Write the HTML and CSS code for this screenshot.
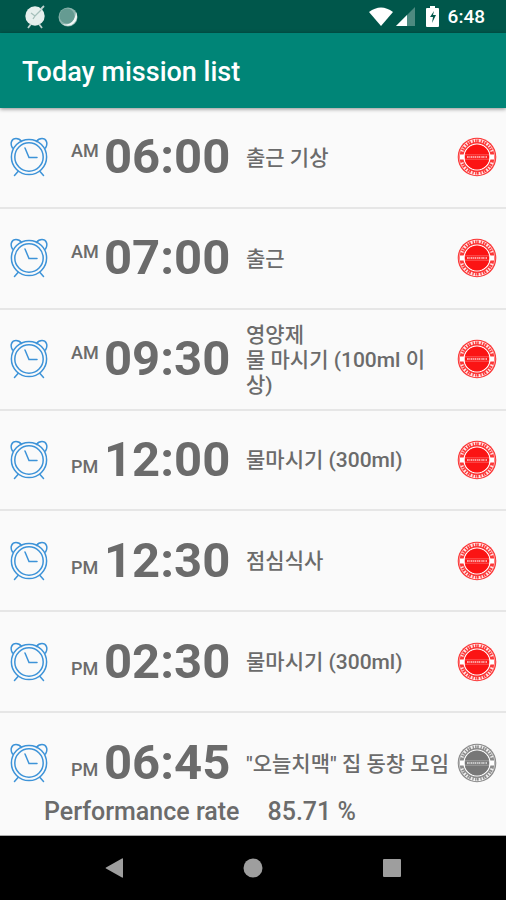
FILE: index.html
```html
<!DOCTYPE html>
<html lang="ko">
<head>
<meta charset="utf-8">
<meta name="viewport" content="width=device-width, initial-scale=1">
<title>Today mission list</title>
<link rel="stylesheet" href="styles.css">
</head>
<body>
<svg class="defs" aria-hidden="true">
  <symbol id="alarm" viewBox="0 0 38 40">
    <g fill="none" stroke="currentColor" stroke-width="1.5" stroke-linecap="round">
      <circle cx="19" cy="20" r="17.6"/>
      <circle cx="19" cy="20" r="14.2"/>
      <path d="M2.500 11C-.5 6 2 1.500 6 1.500 8.500 1.500 10.500 3 11.500 4.500M35.500 11C38.500 6 36 1.500 32 1.500 29.500 1.500 27.500 3 26.500 4.500M8 34.500l-3.500 4M30 34.500l3.500 4M15 11l4 9.500h8"/>
    </g>
  </symbol>
  <symbol id="stamp" viewBox="0 0 40 40">
    <circle cx="20" cy="20" r="19.300" fill="currentColor" opacity=".85"/>
    <g fill="none" stroke="#fff">
      <circle cx="20" cy="20" r="17.800" stroke-width=".7" opacity=".7"/>
      <circle cx="20" cy="20" r="13" stroke-width="1.200"/>
      <path d="M5 14.500a15.700 15.700 0 0 1 30 0" stroke-width="3" stroke-dasharray="1.300 1.500 .7 1.600 2 1.200" opacity=".85"/>
      <path d="M5 25.500a15.700 15.700 0 0 0 30 0" stroke-width="3" stroke-dasharray="1.500 1.400 .6 1.700 1.800 1.200" opacity=".85"/>
    </g>
    <circle cx="20" cy="20" r="12.300" fill="currentColor"/>
    <path d="M3 17.500h4.500v5H3zM32.500 17.500H37v5h-4.500z" fill="#fff"/>
    <path d="M8 17.800h24M8 22.200h24" stroke="#fff" stroke-width=".6" opacity=".5"/>
    <path d="M10 20h20" stroke="#fff" stroke-width="2.200" stroke-dasharray="1.700 .6 1 .5" opacity=".6"/>
  </symbol>
</svg>

<div class="status">
  <svg class="status-icon" viewBox="0 0 22 24" aria-hidden="true">
    <circle cx="11" cy="11" r="9.700" fill="#e6efed"/>
    <path d="M7 19l-3 4M15 19l3 4M17 4l3-3" stroke="#bcd1cd" stroke-width="1.800"/>
    <path d="M7 8l4 3 6-6M11 11l-2 3" fill="none" stroke="#a5bfba" stroke-width="1.300"/>
  </svg>
  <svg class="status-icon" viewBox="0 0 22 24" aria-hidden="true">
    <circle cx="11" cy="12" r="9.500" fill="#8cb5ae"/>
    <path d="M19 7a9.500 9.500 0 0 1-14 12c7 2 13-2 14-12z" fill="#f2f7f6"/>
    <circle cx="10" cy="11" r="7.500" fill="#659b92"/>
  </svg>
  <span class="spacer"></span>
  <svg class="wifi" viewBox="0 0 24 19" aria-hidden="true"><path d="M0 5Q12-4 24 5L12 19z" fill="#fff"/></svg>
  <svg class="signal" viewBox="0 0 19 19" aria-hidden="true"><path d="M19 0v19H0z" fill="#4d8a80"/><path d="M11 8v11H0z" fill="#fff"/></svg>
  <svg class="battery" viewBox="0 0 13 21" aria-hidden="true"><path d="M4 0h5v2h3q1 0 1 1v17q0 1-1 1H1q-1 0-1-1V3q0-1 1-1h3z" fill="#fff"/><path d="M8 5l-4 6h3l-1 6 4-8H7z" fill="#00574b"/></svg>
  <time class="clock">6:48</time>
</div>

<header class="appbar"><h1>Today mission list</h1></header>

<main class="list">
  <article class="row"><svg class="alarm"><use href="#alarm"/></svg><span class="half am">AM</span><time class="time">06:00</time><p class="name">출근 기상</p><svg class="stamp"><use href="#stamp"/></svg></article>
  <article class="row"><svg class="alarm"><use href="#alarm"/></svg><span class="half am">AM</span><time class="time">07:00</time><p class="name">출근</p><svg class="stamp"><use href="#stamp"/></svg></article>
  <article class="row"><svg class="alarm"><use href="#alarm"/></svg><span class="half am">AM</span><time class="time">09:30</time><p class="name">영양제<br>물 마시기 (100ml 이상)</p><svg class="stamp"><use href="#stamp"/></svg></article>
  <article class="row"><svg class="alarm"><use href="#alarm"/></svg><span class="half pm">PM</span><time class="time">12:00</time><p class="name">물마시기 (300ml)</p><svg class="stamp"><use href="#stamp"/></svg></article>
  <article class="row"><svg class="alarm"><use href="#alarm"/></svg><span class="half pm">PM</span><time class="time">12:30</time><p class="name">점심식사</p><svg class="stamp"><use href="#stamp"/></svg></article>
  <article class="row"><svg class="alarm"><use href="#alarm"/></svg><span class="half pm">PM</span><time class="time">02:30</time><p class="name">물마시기 (300ml)</p><svg class="stamp"><use href="#stamp"/></svg></article>
  <article class="row last"><svg class="alarm"><use href="#alarm"/></svg><span class="half pm">PM</span><time class="time">06:45</time><p class="name">"오늘치맥" 집 동창 모임</p><svg class="stamp pending"><use href="#stamp"/></svg></article>
</main>

<footer class="rate"><span>Performance rate</span><span>85.71 %</span></footer>

<nav class="navbar">
  <button type="button" aria-label="Back"><svg viewBox="0 0 20 20"><path d="M19 1v18q0 1-1 .5L2 10.500q-1-.5 0-1L18 .5q1-.5 1 .5z"/></svg></button>
  <button type="button" aria-label="Home"><svg viewBox="0 0 20 20"><circle cx="10" cy="10" r="9.500"/></svg></button>
  <button type="button" aria-label="Recent apps"><svg viewBox="0 0 20 20"><rect x="1" y="1" width="18" height="18" rx="1"/></svg></button>
</nav>
</body>
</html>
```
FILE: styles.css
```css
* { box-sizing: border-box; }

body {
  margin: 0;
  min-height: 100vh;
  display: flex;
  flex-direction: column;
  background: #fafafa;
  color: #6b6b6b;
  font-family: Roboto, "Noto Sans CJK KR", sans-serif;
  font-weight: 500;
}

.defs { display: none; }

.status {
  display: flex;
  align-items: center;
  height: 33px;
  padding: 0 21px 0 24px;
  background: #00574b;
  color: #fff;
}
.status-icon { width: 22px; height: 24px; margin-right: 11px; }
.spacer { flex: 1; }
.wifi { width: 24px; height: 19px; margin-right: 3px; }
.signal { width: 19px; height: 19px; margin-right: 11px; }
.battery { width: 13px; height: 21px; margin-right: 9px; }
.clock { font-size: 19px; line-height: 24px; }

.appbar {
  display: flex;
  align-items: center;
  height: 75px;
  padding: 3px 22px 0;
  background: #008577;
  color: #fff;
  box-shadow: 0 1px 4px rgba(0, 0, 0, 0.45);
}
.appbar h1 { margin: 0; font-size: 27px; line-height: 32px; font-weight: 500; }

.list {
  flex: 1;
  display: grid;
  grid-template-rows: repeat(6, 1fr) auto;
}
.row {
  display: grid;
  grid-template-columns: 38px 56px 142px 1fr 40px;
  align-items: center;
  padding: 0 9px 0 10px;
  border-bottom: 2px solid #e6e6e6;
}
.row.last { height: 78px; padding-top: 22px; border-bottom: 0; }
.alarm { width: 38px; height: 40px; color: #3d93d8; }
.half {
  margin-left: 23px;
  font-size: 18px;
  line-height: 20px;
}
.am { padding-bottom: 12px; }
.pm { padding-top: 14px; }
.time { font-size: 49px; line-height: 56px; font-weight: 700; }
.name {
  margin: 0;
  padding: 2px 7px 0 0;
  font-size: 21px;
  line-height: 25px;
}
.stamp { width: 40px; height: 40px; color: #fb1414; }
.pending { color: #777; }

.rate {
  display: flex;
  gap: 28px;
  height: 45px;
  padding: 5px 44px 0;
  border-bottom: 1px solid #aaa;
  font-size: 25px;
  line-height: 32px;
}

.navbar {
  display: flex;
  justify-content: center;
  gap: 119px;
  height: 64px;
  background: #000;
}
.navbar button {
  display: flex;
  align-items: center;
  padding: 0;
  border: 0;
  background: none;
}
.navbar svg { width: 20px; height: 20px; fill: #9e9e9e; }
```
